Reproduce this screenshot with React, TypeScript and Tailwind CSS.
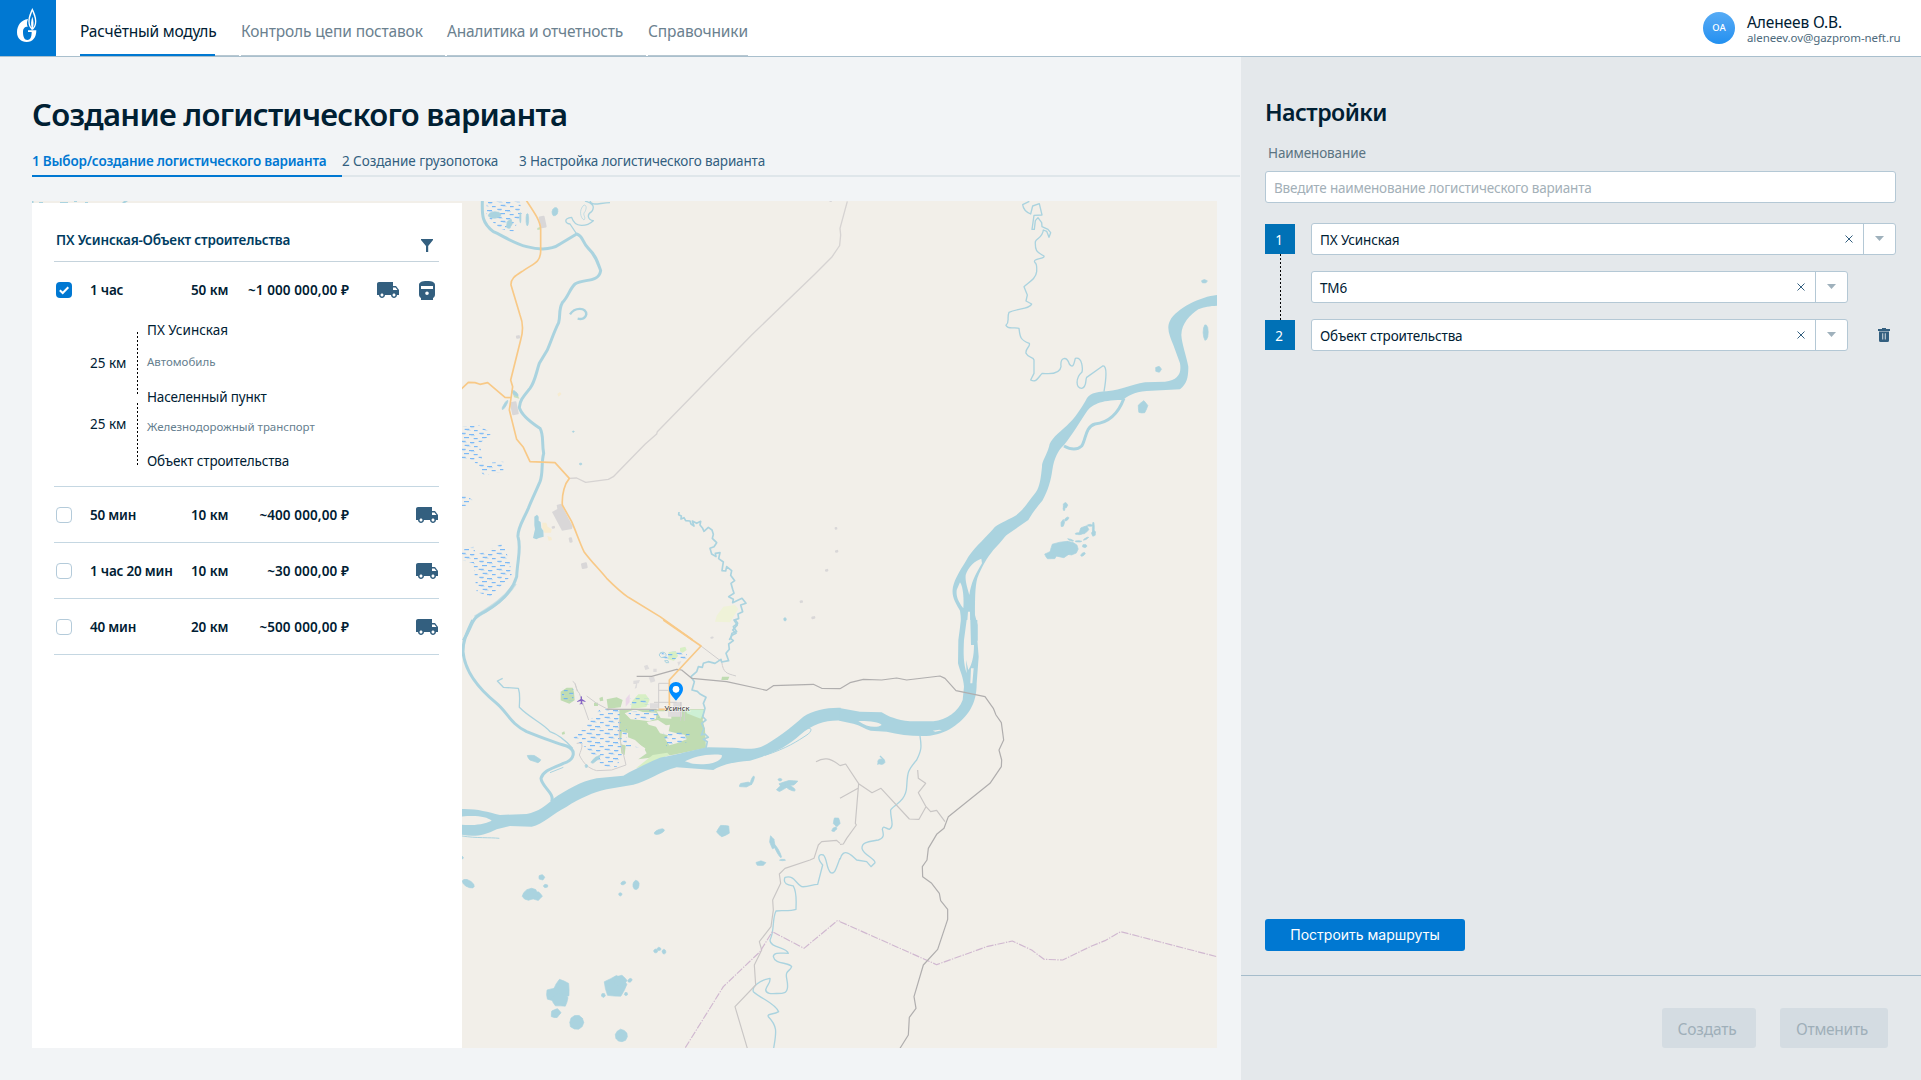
import type { ReactNode } from "react";
import { MdLocalShipping, MdLocalAirport } from "react-icons/md";

const WATER = "#aad3df";
const LAND = "#f2efe9";

/* ---------- icons ---------- */

function Logo() {
  return (
    <svg viewBox="0 0 168 168" className="size-14 shrink-0 bg-[#0078d2]">
      <path
        fill="#fff"
        d="M84 57C64 59 51 76 51 97C51 115 63 126 80 126C98 126 109 113 109 91H84V96H95C95 112 91 120 82 120C73 120 69 110 69 96C69 86 73 80 83 80C80 74 80 66 84 57Z"
      />
      <path
        fill="#fff"
        fillRule="evenodd"
        d="M97 24C90 38 85 50 85 64C85 76 89 83 95 89H99C105 83 109 76 109 64C109 50 104 38 97 24ZM97 34C101 46 105 54 105 64C105 73 103 79 99 83C102 72 101 62 97 50C93 62 92 72 95 83C91 79 89 73 89 64C89 54 93 46 97 34Z"
      />
    </svg>
  );
}

const Truck = () => <MdLocalShipping className="size-6 text-[#335f7f]" />;

function Train() {
  return (
    <svg viewBox="0 0 16 19" className="h-[19px] w-4" fill="#335f7f">
      <path
        fillRule="evenodd"
        d="M0 4C0 1.5 2.5 0 8 0S16 1.500 16 4V13.500C16 15.500 15 16.500 14 17V19H2V17C1 16.500 0 15.500 0 13.500ZM2 5V8H14V5ZM8 10.500A1.800 1.800 0 1 0 8 14.100A1.800 1.800 0 1 0 8 10.500Z"
      />
    </svg>
  );
}

function Filter() {
  return (
    <svg viewBox="0 0 12 13" className="h-[13px] w-3" fill="#335f7f">
      <path d="M0 0H12V1L7.200 7V13H5V7L0 1Z" />
    </svg>
  );
}

function Trash() {
  return (
    <svg viewBox="0 0 12 14" className="h-[14px] w-3" fill="#335f7f">
      <path fillRule="evenodd" d="M4 0H8V1H12V3H0V1H4ZM1 3.500H11V12.500Q11 14 9.500 14H2.500Q1 14 1 12.500ZM4.300 5.200V11.500H5.200V5.200ZM6.800 5.200V11.500H7.700V5.200Z" />
    </svg>
  );
}

/* ---------- map ---------- */

const jitter = [1, 0.86, 1.06, 0.92, 1.1, 0.84, 1.02, 0.94, 1.08, 0.88];

function Blob({ c }: { c: number[] }) {
  const [x, y, rx, ry, rot = 0] = c;
  const pts = jitter
    .map((k, i) => {
      const a = (i / jitter.length) * Math.PI * 2 + x;
      const j = jitter[(i + Math.round(y)) % jitter.length] * 0.6 + k * 0.4;
      return `${(Math.cos(a) * rx * j).toFixed(1)},${(Math.sin(a) * ry * j).toFixed(1)}`;
    })
    .join(" ");
  return (
    <polygon
      points={pts}
      fill={WATER}
      stroke={WATER}
      strokeWidth="2"
      strokeLinejoin="round"
      transform={`translate(${x} ${y}) rotate(${rot})`}
    />
  );
}

const Tile = ({ x, y, children }: { x: number; y: number; children: ReactNode }) => (
  <g transform={`translate(${x} ${y}) scale(0.33333)`} fill="none" strokeLinejoin="round">
    {children}
  </g>
);

const lakesNW = [[104, 45, 20, 10], [148, 72, 8, 14, 20], [285, 35, 9, 13, 20], [202, 59, 4, 20], [181, 53, 2, 16], [340, 695, 3, 2], [362, 792, 4, 3], [975, 1258, 4, 5], [165, 580, 12, 5, 40], [135, 615, 4, 16, 30]];
const lakesSW = [
  [222, 416, 21, 9, 20], [598, 635, 16, 7, -20], [790, 632, 20, 17, -20], [1130, 606, 10, 14], [1123, 628, 9, 5, -40], [25, 791, 21, 10, 28], [4, 713, 6, 5],
  [230, 828, 16, 13], [210, 823, 24, 17, -20], [245, 772, 9, 8], [257, 798, 7, 5], [490, 789, 8, 5, -20], [528, 795, 10, 14], [481, 823, 5, 5], [902, 730, 15, 7], [937, 668, 7, 20, -12], [953, 693, 4, 24, -28], [968, 720, 9, 2],
  [306, 1108, 24, 30], [284, 1124, 26, 22], [300, 1140, 24, 21], [287, 1180, 15, 13, -30], [466, 1100, 33, 33], [480, 1082, 20, 16], [430, 1126, 6, 6], [510, 1081, 7, 5, -30], [498, 1122, 5, 5], [350, 1207, 22, 22], [484, 1247, 19, 19],
  [587, 993, 6, 6], [597, 987, 6, 5], [612, 995, 6, 7], [856, 494, 19, 7, -10], [877, 481, 4, 14, 20], [970, 500, 24, 8, -35], [985, 490, 28, 8, -10], [990, 503, 18, 6, 30], [960, 479, 6, 4], [407, 418, 18, 5, -40], [379, 438, 4, 5],
];
const lakesNE = [
  [1093, 244, 9, 5], [1097, 397, 8, 24], [955, 508, 9, 9], [908, 622, 14, 19, 20], [676, 916, 7, 8], [672, 926, 3, 6], [668, 970, 5, 11, 15], [680, 957, 8, 4, -40],
  [665, 1048, 38, 24, -8], [690, 1045, 25, 21], [633, 1066, 18, 12], [732, 990, 16, 10, -30], [717, 1001, 12, 3], [750, 976, 8, 3], [760, 983, 3, 18], [761, 1000, 6, 9], [738, 1016, 9, 2, -30], [715, 1024, 10, 2], [692, 1020, 9, 2, 20], [734, 1038, 7, 5], [729, 1063, 8, 4, -35],
];

const built = [[248, 66, 9, 18], [163, 625, 10, 20], [174, 411, 6, 5], [373, 1097, 9, 9], [332, 1020, 5, 8], [280, 982, 5, 4], [1128, 985, 4, 4], [1130, 1054, 5, 4], [1100, 1111, 5, 4], [1024, 1205, 5, 4], [1060, 1253, 6, 4], [756, 1313, 5, 3], [1112, 4, 4, 2]];

function MapView() {
  return (
    <svg viewBox="462 201 755 847" className="block h-[847px] w-[755px] shrink-0" style={{ background: LAND }}>
      <defs>
        <pattern id="marsh" width="54" height="48" patternUnits="userSpaceOnUse">
          <path d="M2 4h15M30 8h13M14 16h14M42 20h11M4 28h13M27 32h15M12 41h15M41 44h12" stroke="#66aef8" strokeWidth="3" />
          <path d="M8 7h12M33 11h8M20 19h12M7 31h9M33 35h12" stroke="#b4d5f2" strokeWidth="2" />
        </pattern>
      </defs>

      {/* north-west */}
      <Tile x={460} y={200}>
        <path fill="#f7ecd0" d="M247 968l12 0 4 12 12 8-2 10-20 0-6-14zM262 1008l12 4 2 8-10 2zM292 582l8-6 4 6-8 8z" />
        <path fill="#eff2d8" d="M790 1220l35-5 10 12-25 40-45-2 5-18z" />
        <path fill="#c8e0bb" d="M156 572l14 4 8 20-16-4zM232 84l10-4 2 8-12 2z" />
        <path fill="#d9d7d8" d="M276 936l16-9-2-12 14-4 4 10 30 58-2 8-30 5z" />
        {built.map(([x, y, rx, ry]) => (
          <rect key={`${x}-${y}`} x={x - rx} y={y - ry} width={rx * 2} height={ry * 2} rx="3" fill="#d9d7d8" transform={`rotate(-12 ${x} ${y})`} />
        ))}
        <path fill="url(#marsh)" d="M80 5H180L185 40L160 95L115 85L80 45ZM6 680L55 675L95 700L60 730L68 790L130 785V815L70 825L40 780L6 775ZM6 880L38 900V918H6ZM6 1050L40 1040L50 1065L130 1030L150 1090L155 1125L90 1190L50 1175L40 1090L6 1080Z" />
        {lakesNW.map((c) => <Blob key={c.join()} c={c} />)}
        <path fill={WATER} d="M223 950l8-6 5 6 0 12 6 4 2 18 6 8 1 18-14 4-8 4-10-4 4-18 2-8-2-12z" />
        <path
          stroke={WATER}
          strokeWidth="9"
          d="M67 0C67 40 62 65 100 95C125 105 160 130 200 140C240 150 275 150 300 132L350 102C370 108 365 125 385 145C410 170 414 190 422 212C415 250 370 235 345 252C330 265 325 290 307 308C295 330 302 345 296 368C280 400 275 420 262 450L238 490C228 520 225 545 210 565C190 590 180 600 178 622C185 650 225 675 240 685C252 705 245 730 251 760C243 790 250 820 240 845C225 880 215 900 205 925C190 960 172 985 174 1010C185 1045 172 1080 170 1130C155 1180 110 1215 75 1235C30 1255 40 1275 10 1322"
        />
        <path stroke={WATER} strokeWidth="11" d="M165 1150C135 1200 80 1230 45 1252" strokeOpacity=".6" />
        <path stroke={WATER} strokeWidth="7" d="M330 343C345 320 378 322 379 343C376 358 362 358 353 356" />
        <path stroke={WATER} strokeWidth="4" d="M350 102L330 72C315 70 310 55 335 52C345 85 380 80 400 62C385 60 378 45 395 35C405 20 400 10 375 3M390 3C395 20 420 8 450 8" />
        <path stroke={WATER} strokeWidth="2" d="M372 15C355 30 362 55 372 60C380 50 365 45 375 35C380 25 380 15 372 15" />
        <path
          stroke={WATER}
          strokeWidth="5"
          d="M657 936L656 944L664 948L663 957L672 953L677 962L690 963L693 972L702 978L697 963L710 970L722 964L720 975L728 985L732 994L745 982L756 990L760 1003L757 1015L770 1028L762 1040L750 1045L755 1062L768 1070L766 1060L780 1058L776 1076L790 1086L786 1112L797 1113L800 1100L815 1112L812 1126L824 1142L813 1150L818 1168L822 1180L806 1190L820 1198L818 1208L835 1200L846 1195L858 1210L842 1215L848 1235L834 1242L836 1256L822 1260L832 1275L818 1290L828 1300L816 1306L808 1320"
        />
        <path stroke="#d6d3d2" strokeWidth="4" d="M328 835L350 834L377 847L445 838L460 830L555 733L590 702L592 695L875 405L1065 222L1115 172L1140 135" />
        <path
          stroke="#f8c987"
          strokeWidth="5"
          d="M198 0C225 40 242 65 242 90V155C240 190 220 190 190 212C165 228 152 235 153 255L180 345C190 370 188 400 182 420L152 540L158 560L148 630L170 718L190 742L210 785L285 788L328 835C315 850 305 880 307 915L335 965C350 1000 360 1030 372 1055C390 1080 415 1105 440 1135C460 1155 480 1175 505 1192L600 1250L698 1320M0 571L25 547L45 548L60 553L83 548L135 592L152 593"
        />
      </Tile>

      {/* south-west: the town and the main river */}
      <Tile x={460} y={620}>
        <path fill="#c0dcb2" d="M302 215l18-12 18 0 4 14 2 24-16 10-26-10zM440 238l30-6 18 8-6 22-38 4zM305 338l8-4 2 8-8 2zM418 234l10-4 2 12-10 2zM402 248h12v10h-12zM786 170l22 0-4 10-20 0z" />
        <path fill="#d7efc4" d="M515 245l20-22 22 0 12 16-10 22-46 6zM626 96l22-2 6 14-12 14-18-4zM660 84l16-4 4 10-12 8-8-4z" />
        <path fill="#ead7e8" d="M497 236l12-14 0 24-12 14z" />
        <path fill="#c0dcb2" d="M478 268H735L728 300L735 330L738 384L640 404L535 418L560 400L552 385L525 360L500 350L494 405L484 400L478 340Z" />
        <path fill="#d7efc4" d="M528 445L578 405L622 398L628 404L570 432Z" />
        <path fill="#cdf0d4" d="M735 270L722 296L680 280V270Z" />
        <path fill={LAND} d="M494 280l30-12 24 8 42 2-2 18-20 8-30-4-26-2zM560 306l34-6 24 16 12-2-4 20 18 4 30 6 6 14-30 12-22 6-12-18 8-12-24-6-12-20-22-6zM486 335l18 4 0 16 30 16 22 14-6 14-22 0-20-20-26-6zM590 274l44 0 0 22-32-2z" />
        <path fill="#dedcdc" d="M624 270h42v20h-42zM640 246h26v22h-26zM552 138l10-4 6 12-12 4zM566 172l16-2 4 14-14 4zM580 146l10 0 0 10-10 0zM520 182l20-2-4 10-4 0-2 14-6 2 4-14-8 0zM652 126l12-2-8 14zM570 250h24v14h-24z" />
        <path fill="url(#marsh)" d="M420 268H478L490 400L470 440H430L380 385L340 355L385 305ZM500 275L590 270L600 300L530 300ZM610 335L690 335L685 365L620 380ZM485 320H500V370L540 385H490ZM510 235h60v20h-60zM306 205h34v38h-34zM605 94h75v24h-75z" />
        <path stroke="#d0cece" strokeWidth="3" d="M338 184C350 190 345 205 358 220L372 260L386 300M345 190L352 214M380 228L410 250L440 266L478 268H640M596 190V266M596 190H628M596 211H625M582 247H650M662 246V302M673 270V302M350 370C375 365 365 385 358 405C370 430 385 445 410 452L455 450L498 435L478 350V300M723 78L785 125C790 160 800 160 828 168" />
        <path stroke="#b4b2b2" strokeWidth="3" d="M440 268H590" />
        {lakesSW.map((c) => <Blob key={c.join()} c={c} />)}
        <path stroke={WATER} strokeWidth="3" d="M600 100a10 8 0 1 1 12 12a8 6 0 1 1 -8 -14M614 122h10l2 6h-8z" />
        <path stroke={WATER} strokeWidth="9" d="M38 0C20 40 9 60 9 95C15 160 60 210 110 250C145 280 150 310 200 335C250 355 290 370 320 378C350 390 345 420 310 430C280 445 250 450 243 475C245 500 285 520 275 545" />
        <path stroke={WATER} strokeWidth="4" d="M128 175L112 183L130 202L175 205C182 225 178 245 178 262C210 295 250 310 270 335C300 345 320 365 338 385" />
        <path
          stroke={WATER}
          strokeWidth="5"
          d="M826 0L833 10L820 20L830 35L816 40L812 55L820 62L806 72L808 88L798 100L806 122L785 126L783 118L765 130L745 125L730 130L727 142L715 140L710 155L693 170L703 185L696 210L712 214L720 222L738 232L730 250L735 265L728 290L738 300L725 310L732 326L724 345L735 342L745 352L730 358L742 365L738 384"
        />
        <path
          fill={WATER}
          d="M1142 263C1100 262 1060 270 1030 290C990 325 940 365 900 382C870 390 850 385 820 383L745 382C720 385 650 405 600 413C560 430 520 450 490 467L410 475C360 485 320 510 280 536C260 555 235 575 200 582L120 585C80 575 50 565 0 567V590C50 585 80 590 95 602C70 615 30 617 0 614V643C40 652 70 648 110 628L150 618L215 620C250 612 280 580 320 560C360 535 400 517 440 508L520 494C560 485 600 455 650 442L760 450L770 444C800 430 830 425 870 422C930 405 980 382 1020 345C1060 310 1100 300 1142 302Z"
        />
        <path fill={LAND} d="M675 424C700 412 740 400 785 405C790 415 770 430 740 432C710 435 690 430 675 424Z" />
        <path stroke={WATER} strokeWidth="3" d="M6 648C50 655 90 652 118 655M915 406C980 385 1010 365 1045 342C1062 325 1050 320 1030 330M270 458L310 442" />
        <path
          stroke={WATER}
          strokeWidth="4"
          d="M1140 715C1130 740 1125 765 1112 758C1098 745 1102 715 1090 705C1075 700 1070 715 1088 735L1073 793C1060 792 1045 802 1025 800C1005 790 1005 765 975 772C967 792 985 795 1000 798C1012 820 1008 845 1008 868C990 875 960 870 948 873C935 900 945 930 930 960C930 985 980 980 985 1000C965 1000 940 995 940 1010C945 1035 985 1025 995 1040C990 1055 975 1050 980 1075C985 1100 985 1120 965 1120C940 1120 920 1125 917 1110C920 1095 932 1090 930 1075C900 1080 875 1100 880 1115C910 1140 945 1150 956 1175C940 1185 920 1180 925 1190C955 1220 948 1240 941 1285"
        />
        <path stroke="#c9c6c5" strokeWidth="3.500" d="M1140 670L1130 661L1085 665L1075 675L1062 715L1050 720L975 745L958 762L962 790L938 840L940 870L933 920L898 965L905 990L883 1035L887 1095L825 1160L862 1285M1068 425C1090 412 1110 412 1140 437" />
        <path stroke="#d0b8d0" strokeWidth="3.500" strokeDasharray="22 4 4 4" d="M676 1283L790 1100L900 995L937 935L1032 985L1132 902L1140 903" />
        <path stroke="#b0aeae" strokeWidth="3.600" d="M530 169L575 169L650 148L665 150L695 175L800 185L920 211L940 197L1060 193L1085 205L1140 206" />
        <path stroke="#f8c987" strokeWidth="5" d="M610 0L723 78L628 180V268H596" />
        <svg x="349" y="226" width="30" height="30" viewBox="0 0 24 24" overflow="visible">
          <MdLocalAirport size={24} color="#8461c4" />
        </svg>
        <path fill="#008cff" fillRule="evenodd" d="M648 186C636 186 627 195 627 207C627 221 640 232 648 242C656 232 669 221 669 207C669 195 660 186 648 186ZM648 198A10 10 0 1 1 648 218A10 10 0 1 1 648 198Z" />
        <circle cx="648" cy="208" r="9.500" fill="#fff" />
      </Tile>

      {/* north-east */}
      <Tile x={840} y={200}>
        {lakesNE.map((c) => <Blob key={c.join()} c={c} />)}
        <path
          fill={WATER}
          d="M1134 285C1085 288 1010 325 990 362C978 385 990 410 1000 435L1020 490C1025 520 1015 540 975 545L915 547C870 555 850 568 800 574C765 575 745 583 738 600C720 630 705 655 680 677C655 700 630 718 627 740C620 765 605 785 606 800C603 830 600 858 588 876C560 912 550 930 525 948C500 962 470 973 460 986C440 1010 410 1035 385 1070C365 1105 350 1125 342 1150C330 1185 345 1205 360 1232C365 1260 362 1290 358 1322H413V1275L405 1245C405 1200 405 1160 412 1135C425 1100 440 1075 460 1050C480 1030 490 1015 500 1005L565 960C580 935 595 915 607 902C625 870 633 840 637 810C642 775 655 750 672 735C700 700 720 665 740 635C755 615 780 600 845 600C865 590 880 575 920 573L1020 568C1040 550 1045 535 1045 500C1040 470 1025 430 1024 405C1025 370 1050 345 1075 328C1095 320 1110 318 1134 317Z"
        />
        <path stroke={WATER} strokeWidth="9" d="M852 595C835 640 810 668 765 672C735 680 738 720 725 738C710 752 690 748 672 738" />
        <path fill={LAND} d="M424 1076L426 1090C405 1125 393 1150 388 1185C383 1165 375 1145 377 1125C385 1100 405 1082 424 1076ZM360 1147C370 1160 372 1200 370 1225C355 1205 348 1190 350 1170ZM384 1235H390L391 1322H376C380 1290 382 1260 384 1235Z" />
        <path
          stroke={WATER}
          strokeWidth="4"
          d="M568 4L548 14C550 30 562 38 572 42L578 18L598 11L606 45L582 46L576 88L583 88L586 62L594 53L605 68L606 80L624 88L632 98L627 112L620 94L610 90C608 112 590 115 586 125C585 150 588 155 612 168C615 178 575 174 585 188C592 192 590 205 590 215C588 235 570 245 552 260L562 285L558 303L575 312C570 328 530 325 507 337C500 355 510 365 498 376C505 390 520 380 537 385C540 410 540 420 568 430C572 440 555 445 558 460C565 475 580 470 582 480V520L572 540C590 550 595 530 607 520C625 522 660 525 663 500C660 470 680 468 688 492C700 508 702 490 706 475C728 470 728 508 726 516C705 535 708 565 725 565C742 560 735 540 740 532L788 498C803 495 798 540 792 575"
        />
        <path stroke="#d6d3d2" strokeWidth="4" d="M22 4L0 85L2 105L-1 135" />
      </Tile>

      {/* south-east */}
      <Tile x={840} y={620}>
        <Blob c={[124, 425, 11, 9]} />
        <path stroke={WATER} strokeWidth="4" d="M120 408L132 420L112 433" />
        <path
          fill={WATER}
          d="M363 0L355 60L354 130C360 155 370 170 372 200L368 240C355 275 320 300 280 304H210C170 300 145 290 125 277L60 275L-2 264V302L40 311C60 315 75 328 92 332L140 335C180 345 230 350 270 347C330 340 370 300 390 270C405 245 410 220 410 190L416 110L412 60V0Z"
        />
        <path fill={LAND} d="M380 0H391L393 75H402C402 110 395 135 385 150L378 120L380 160C370 130 370 100 372 60ZM393 145H401L397 190H391ZM55 303C80 302 120 305 125 315C110 325 80 322 55 303ZM278 332L298 329L306 331L286 335Z" />
        <path stroke={WATER} strokeWidth="4" d="M240 348C245 380 245 390 230 420C200 455 203 460 200 500C198 545 160 555 152 570C150 590 165 620 148 628C135 625 130 615 127 628C132 645 132 655 115 660C90 665 65 665 66 685C70 705 105 715 105 728L93 740L80 725L50 720C35 705 10 680 0 718" />
        <path stroke="#c9c6c5" strokeWidth="3.500" d="M0 437L17 432L56 491L96 518L123 505L208 597L237 598L258 560L235 518L257 490L235 475L233 450M258 560L272 575L290 571L315 605M0 535L54 505M56 491L46 610L49 615L20 655L10 672L0 673" />
        <path stroke="#d0b8d0" strokeWidth="3.500" strokeDasharray="22 4 4 4" d="M0 905L290 1034L440 980L517 963L575 990L612 1018L668 1020L755 978L795 962L842 935L1134 1011" />
        <path
          stroke="#b0aeae"
          strokeWidth="3.600"
          d="M0 206L30 188L70 178L125 180L170 174L200 180L300 168L315 175L348 212L435 230L460 265L468 285L484 308L491 360L477 390L485 420L484 440L450 490L325 590L312 625L290 643L265 685L261 720L247 740L248 770L275 790L298 820L302 842L323 868L323 898L293 988L250 1035L222 1130L228 1165L208 1192L205 1245L180 1285"
        />
      </Tile>

      <text x="677" y="710.500" textAnchor="middle" className="font-['Noto_Sans',sans-serif] text-[7.6px]" fill="#333" stroke="#fff" strokeOpacity=".7" strokeWidth="1.200" paintOrder="stroke">
        Усинск
      </text>
    </svg>
  );
}

/* ---------- left panel ---------- */

function Checkbox({ checked = false }: { checked?: boolean }) {
  return checked ? (
    <span className="flex size-4 shrink-0 items-center justify-center rounded bg-[#0078d2]">
      <svg viewBox="0 0 16 16" className="size-4" fill="none" stroke="#fff" strokeWidth="2">
        <path d="M3.800 8.200L6.700 11L12.300 5.200" />
      </svg>
    </span>
  ) : (
    <span className="size-4 shrink-0 rounded border border-[#b4cbda] bg-white" />
  );
}

type RowProps = { time: string; dist: string; price: string; checked?: boolean; icons: ReactNode };

function RouteRow({ time, dist, price, checked, icons }: RowProps) {
  return (
    <div className="flex h-[55px] items-center pt-px pl-0.5 text-[13.5px] font-semibold whitespace-nowrap text-[#002033]">
      <Checkbox checked={checked} />
      <span className="ml-[18px] w-[101px] tracking-[-0.22px]">{time}</span>
      <span className="w-[42px] tracking-[-0.1px]">{dist}</span>
      <span className="w-[116px] text-right tracking-[0.1px]">{price}</span>
      <span className="flex grow items-center justify-end gap-5">{icons}</span>
    </div>
  );
}

const dotted = "bg-[repeating-linear-gradient(to_bottom,#000_0_2px,transparent_2px_4px)]";

function RouteDetails() {
  return (
    <div className="flex h-[169px] pt-[3px] pl-9 text-[13.5px] whitespace-nowrap text-[#002033]">
      <div className="flex w-[47px] flex-col pt-[33px]">
        <span className="h-5 leading-5">25 км</span>
        <span className="mt-[41px] h-5 leading-5">25 км</span>
      </div>
      <div className="flex w-px flex-col gap-2 pt-3">
        <span className={`h-[63px] w-px ${dotted}`} />
        <span className={`h-[63px] w-px ${dotted}`} />
      </div>
      <div className="flex flex-col pl-[9px] leading-5">
        <span>ПХ Усинская</span>
        <span className="mt-3 text-[11.5px] text-[#66808f]">Автомобиль</span>
        <span className="mt-[15px] tracking-[-0.17px]">Населенный пункт</span>
        <span className="mt-2.5 text-[11.5px] tracking-[-0.03px] text-[#66808f]">Железнодорожный транспорт</span>
        <span className="mt-[14px] tracking-[-0.17px]">Объект строительства</span>
      </div>
    </div>
  );
}

function RoutesPanel() {
  return (
    <div className="flex w-[430px] shrink-0 flex-col">
      <svg viewBox="0 0 430 2" className="block h-0.5 w-[430px]" fill={WATER}>
        <path d="M0 0h1.500v2H0zM7 1h4v1H7zM28 1h8v1h-8zM42 0h3v1h-3zM53 1h3v1h-3zM92 0h4l-3 2h-3z" />
      </svg>
      <div className="flex grow flex-col bg-white pr-[23px] pl-[22px]">
        <div className="flex h-[59px] items-start justify-between border-b border-[#c5d3dc] pr-[6px]">
          <h2 className="mt-[27px] ml-0.5 text-[13.5px] leading-5 font-semibold tracking-[-0.2px] whitespace-nowrap text-[#003c61]">ПХ Усинская-Объект строительства</h2>
          <span className="mt-9"><Filter /></span>
        </div>
        <div className="border-b border-[#c5d7e2]">
          <RouteRow
            checked
            time="1 час"
            dist="50 км"
            price="~1 000 000,00 ₽"
            icons={<><Truck /><span className="mr-1 -ml-1 flex pl-[3px]"><Train /></span></>}
          />
          <RouteDetails />
        </div>
        {[
          ["50 мин", "10 км", "~400 000,00 ₽"],
          ["1 час 20 мин", "10 км", "~30 000,00 ₽"],
          ["40 мин", "20 км", "~500 000,00 ₽"],
        ].map(([time, dist, price]) => (
          <div key={time} className="border-b border-[#c5d7e2]">
            <RouteRow time={time} dist={dist} price={price} icons={<Truck />} />
          </div>
        ))}
      </div>
    </div>
  );
}

/* ---------- settings ---------- */

function Select({ value, className = "" }: { value: string; className?: string }) {
  return (
    <div className={`flex h-8 rounded-[3px] border border-[#b4c8d5] bg-white ${className}`}>
      <span className="mt-px grow pl-2 text-[13.5px] leading-[31px] tracking-[-0.15px] text-[#002033]">{value}</span>
      <svg viewBox="0 0 8 8" className="mt-[11px] mr-[10px] size-2" stroke="#335f7f" strokeWidth="1">
        <path d="M0.500 0.500L7.500 7.500M7.500 0.500L0.500 7.500" />
      </svg>
      <span className="flex w-8 justify-center border-l border-[#b4c8d5]">
        <svg viewBox="0 0 9 5" className="mt-3 h-[5px] w-[9px]" fill="#9fb1bc">
          <path d="M0 0H9L4.500 5Z" />
        </svg>
      </span>
    </div>
  );
}

const Step = ({ n }: { n: number }) => (
  <span className="flex size-[30px] shrink-0 items-center justify-center bg-[#0071b6] pt-0.5 pr-0.5 text-[13.5px] text-white">{n}</span>
);

function Settings() {
  return (
    <aside className="flex w-[680px] shrink-0 flex-col bg-[#e4e8eb]">
      <div className="flex h-[919px] flex-col border-b border-[#a5bccb] pl-6">
        <h2 className="mt-[39px] text-[23.2px] leading-8 font-semibold tracking-[-0.55px] text-[#002033]">Настройки</h2>
        <label className="mt-[15px] ml-[3px] text-[13.5px] leading-5 tracking-[-0.13px] text-[#5b7482]">Наименование</label>
        <div className="mt-2 flex h-8 w-[631px] items-center rounded-[3px] border border-[#b4c8d5] bg-white pt-0.5 pl-2 text-[13.5px] tracking-[-0.18px] text-[#a3b0b8]">
          Введите наименование логистического варианта
        </div>
        <div className="mt-5 flex">
          <div className="flex w-[30px] flex-col items-center pt-px">
            <Step n={1} />
            <span className={`h-[66px] w-px ${dotted}`} />
            <Step n={2} />
          </div>
          <div className="ml-4 flex flex-col gap-4">
            <Select value="ПХ Усинская" className="w-[585px]" />
            <Select value="ТМ6" className="w-[537px]" />
            <div className="flex">
              <Select value="Объект строительства" className="w-[537px]" />
              <span className="mt-[9px] ml-[30px]"><Trash /></span>
            </div>
          </div>
        </div>
        <button className="mt-auto mb-6 h-8 w-[200px] rounded-[3px] bg-[#0078d2] font-['Inter',sans-serif] text-sm text-white">
          Построить маршруты
        </button>
      </div>
      <div className="flex justify-end gap-6 pt-8 pr-[33px]">
        <button className="h-10 w-[94px] rounded-[3px] bg-[#d4dce2] pt-[3px] pr-1 text-[15.5px] tracking-[-0.2px] text-[#9fafb9]">Создать</button>
        <button className="h-10 w-[108px] rounded-[3px] bg-[#d4dce2] pt-[3px] pr-1 text-[15.5px] tracking-[-0.28px] text-[#9fafb9]">Отменить</button>
      </div>
    </aside>
  );
}

/* ---------- page ---------- */

const nav = [
  { label: "Контроль цепи поставок", cls: "w-[204px] mr-0.5 tracking-[-0.14px]" },
  { label: "Аналитика и отчетность", cls: "w-[199px] mr-0.5 tracking-[-0.22px]" },
  { label: "Справочники", cls: "w-[100px] tracking-[-0.12px]" },
];

export default function App() {
  return (
    <div className="flex h-[1080px] w-[1921px] flex-col overflow-hidden bg-[#f2f4f6] font-['Noto_Sans',sans-serif]">
      <header className="flex h-[57px] shrink-0 border-b border-[#a9bfcd] bg-white">
        <Logo />
        <nav className="ml-6 flex text-[15.5px] whitespace-nowrap text-[#6b818f]">
          <span className="h-14 w-[135px] border-b-2 border-[#0078d2] pt-5 leading-[22px] tracking-[-0.22px] text-[#002033]">Расчётный модуль</span>
          <span className="mr-0.5 h-14 w-6 border-b border-[#b7c7d1]" />
          {nav.map((n) => (
            <span key={n.label} className={`h-14 border-b border-[#b7c7d1] pt-5 leading-[22px] ${n.cls}`}>{n.label}</span>
          ))}
        </nav>
        <div className="ml-auto flex w-[218px] pt-3">
          <span className="flex size-8 shrink-0 items-center justify-center rounded-full bg-linear-to-b from-[#56abf5] to-[#2090f0] pt-px text-[9.5px] font-medium text-white">ОА</span>
          <div className="ml-3 flex flex-col whitespace-nowrap">
            <span className="text-[15.5px] leading-5 tracking-[-0.12px] text-[#002033]">Аленеев О.В.</span>
            <span className="-mt-0.5 text-[11.5px] leading-4 tracking-[-0.08px] text-[#4d6a7c]">aleneev.ov@gazprom-neft.ru</span>
          </div>
        </div>
      </header>

      <div className="flex grow">
        <main className="flex w-[1241px] shrink-0 flex-col pl-8">
          <h1 className="mt-[37px] text-[31px] leading-10 font-semibold tracking-[-0.73px] text-[#002033]">Создание логистического варианта</h1>
          <div className="mt-3.5 flex h-[29px] w-[1208px] border-b-2 border-[#dfe6ea] text-[13.5px] leading-[26px] whitespace-nowrap text-[#335f7f]">
            <span className="h-[29px] w-[310px] border-b-2 border-[#0078d2] font-semibold tracking-[-0.21px] text-[#0078d2]">1 Выбор/создание логистического варианта</span>
            <span className="w-[177px] tracking-[-0.06px]">2 Создание грузопотока</span>
            <span className="tracking-[-0.15px]">3 Настройка логистического варианта</span>
          </div>
          <div className="mt-6 flex h-[847px] w-[1185px] bg-[#f2efe9]">
            <RoutesPanel />
            <MapView />
          </div>
        </main>
        <Settings />
      </div>
    </div>
  );
}
